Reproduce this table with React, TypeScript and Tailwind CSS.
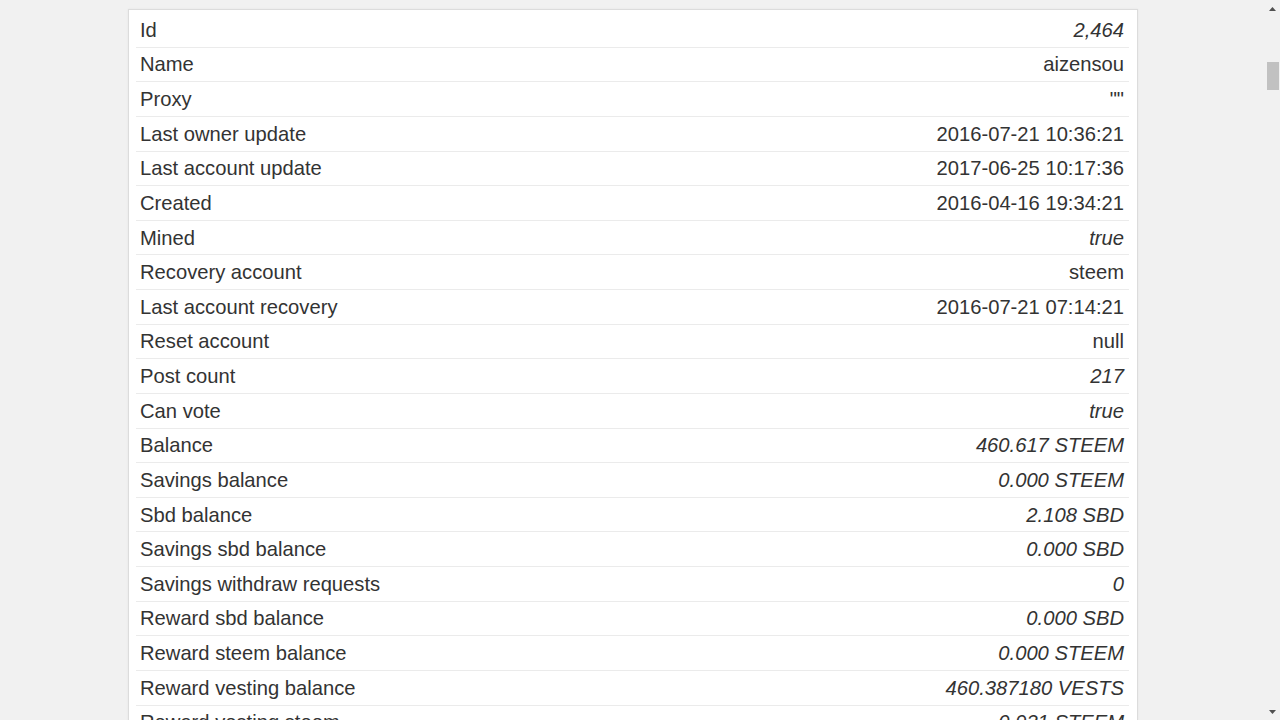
import React from "react";

type Row = { label: string; value: string; italic?: boolean };

const rows: Row[] = [
  { label: "Id", value: "2,464", italic: true },
  { label: "Name", value: "aizensou" },
  { label: "Proxy", value: '""' },
  { label: "Last owner update", value: "2016-07-21 10:36:21" },
  { label: "Last account update", value: "2017-06-25 10:17:36" },
  { label: "Created", value: "2016-04-16 19:34:21" },
  { label: "Mined", value: "true", italic: true },
  { label: "Recovery account", value: "steem" },
  { label: "Last account recovery", value: "2016-07-21 07:14:21" },
  { label: "Reset account", value: "null" },
  { label: "Post count", value: "217", italic: true },
  { label: "Can vote", value: "true", italic: true },
  { label: "Balance", value: "460.617 STEEM", italic: true },
  { label: "Savings balance", value: "0.000 STEEM", italic: true },
  { label: "Sbd balance", value: "2.108 SBD", italic: true },
  { label: "Savings sbd balance", value: "0.000 SBD", italic: true },
  { label: "Savings withdraw requests", value: "0", italic: true },
  { label: "Reward sbd balance", value: "0.000 SBD", italic: true },
  { label: "Reward steem balance", value: "0.000 STEEM", italic: true },
  { label: "Reward vesting balance", value: "460.387180 VESTS", italic: true },
  { label: "Reward vesting steem", value: "0.931 STEEM", italic: true },
  { label: "Vesting shares", value: "0.000000 VESTS", italic: true },
];

export default function App() {
  return (
    <div
      className="flex h-[720px] w-full overflow-hidden bg-[#f1f1f1] text-[#333]"
      style={{ fontFamily: '"Liberation Sans", Arial, sans-serif' }}
    >
      <div className="flex-1 min-w-0">
        <div className="ml-[128px] mt-[9px] w-[1010px] border border-[#dcdcdc] bg-white pl-[7px] pr-[8px] pt-[3px] shadow-[0_0_2px_rgba(0,0,0,0.06)]">
          {rows.map((r) => (
            <div
              key={r.label}
              className="flex h-[34.63px] items-center justify-between border-b border-[#ebebeb] pl-[4px] pr-[5px] text-[20.2px] leading-[28px]"
            >
              <span>{r.label}</span>
              <span className={r.italic ? "italic" : ""}>{r.value}</span>
            </div>
          ))}
        </div>
      </div>
      <div className="flex w-[15px] shrink-0 flex-col items-center bg-[#f1f1f1]">
        <div className="flex h-[17px] w-full items-center justify-center">
          <svg width="7" height="4" viewBox="0 0 7 4">
            <polygon points="3.5,0 7,4 0,4" fill="#505050" />
          </svg>
        </div>
        <div className="mt-[45px] h-[28px] w-[12px] bg-[#c1c1c1]" />
        <div className="flex-1" />
        <div className="flex h-[17px] w-full items-center justify-center">
          <svg width="7" height="4" viewBox="0 0 7 4">
            <polygon points="0,0 7,0 3.5,4" fill="#505050" />
          </svg>
        </div>
      </div>
    </div>
  );
}
